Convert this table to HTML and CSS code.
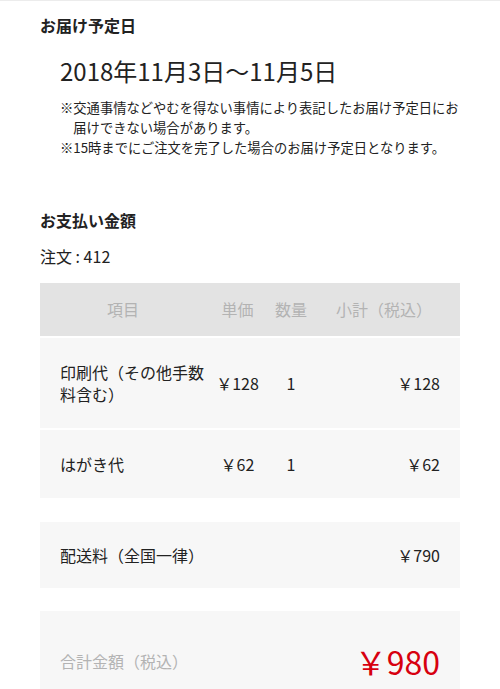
FILE: index.html
```html
<!DOCTYPE html>
<html lang="ja">
<head>
<meta charset="utf-8">
<link rel="stylesheet" href="styles.css">
</head>
<body>
<div class="page">
  <h2 class="title">お届け予定日</h2>
  <p class="date">2018年11月3日〜11月5日</p>
  <ul class="notes">
    <li>※交通事情などやむを得ない事情により表記したお届け予定日にお届けできない場合があります。</li>
    <li>※15時までにご注文を完了した場合のお届け予定日となります。</li>
  </ul>

  <h2 class="title pay">お支払い金額</h2>
  <p class="order">注文 : 412</p>

  <div class="table">
    <div class="row head">
      <div class="c1">項目</div>
      <div class="c2">単価</div>
      <div class="c3">数量</div>
      <div class="c4">小計（税込）</div>
    </div>
    <div class="row">
      <div class="c1">印刷代（その他手数料含む）</div>
      <div class="c2">￥128</div>
      <div class="c3">1</div>
      <div class="c4">￥128</div>
    </div>
    <div class="row">
      <div class="c1">はがき代</div>
      <div class="c2">￥62</div>
      <div class="c3">1</div>
      <div class="c4">￥62</div>
    </div>
  </div>

  <div class="box">
    <div>配送料（全国一律）</div>
    <div>￥790</div>
  </div>

  <div class="box total">
    <div class="label">合計金額（税込）</div>
    <div class="amount">￥980</div>
  </div>
</div>
</body>
</html>
```

FILE: styles.css
```css
html, body {
  margin: 0;
  padding: 0;
  background: #fff;
}
body {
  font-family: "Noto Sans CJK JP", "Noto Sans", sans-serif;
  color: #222;
  border-top: 1px solid #ececec;
}
.page {
  padding: 13px 40px 0;
}
.title {
  margin: 0;
  font-size: 16px;
  line-height: 22px;
  font-weight: 700;
}
.date {
  margin: 18px 0 0 20px;
  font-size: 24px;
  line-height: 34px;
}
.notes {
  list-style: none;
  margin: 10px 0 0 20px;
  padding: 0;
  font-size: 13.3px;
  line-height: 20px;
}
.notes li {
  padding-left: 1em;
  text-indent: -1em;
}
.pay {
  margin-top: 51px;
}
.order {
  margin: 14px 0 0;
  font-size: 16px;
  line-height: 22px;
}
.table {
  margin-top: 16px;
  display: flex;
  flex-direction: column;
  gap: 2px;
}
.row {
  display: grid;
  grid-template-columns: 175px 45px 62px 1fr;
  background: #f7f7f7;
  padding: 23px 0;
  font-size: 16px;
  line-height: 22px;
  align-items: center;
}
.row .c1 {
  padding: 0 5px 0 20px;
}
.row .c2, .row .c3 {
  text-align: center;
  white-space: nowrap;
}
.row .c4 {
  text-align: right;
  padding-right: 20px;
}
.row.head {
  background: #e3e3e3;
  color: #b3b3b3;
  padding-top: 15px;
  padding-bottom: 16px;
}
.row.head div {
  text-align: center;
}
.row.head .c1 {
  padding: 0 9px 0 0;
}
.row.head .c4 {
  padding-right: 14px;
}
.box {
  margin-top: 24px;
  background: #f7f7f7;
  padding: 22px 20px;
  font-size: 16px;
  line-height: 22px;
  display: flex;
  justify-content: space-between;
  align-items: center;
}
.total {
  margin-top: 23px;
  padding-top: 28px;
  padding-bottom: 28px;
}
.total .label {
  color: #b3b3b3;
}
.total .amount {
  color: #d7000f;
  font-size: 32px;
  line-height: 44px;
}
```
